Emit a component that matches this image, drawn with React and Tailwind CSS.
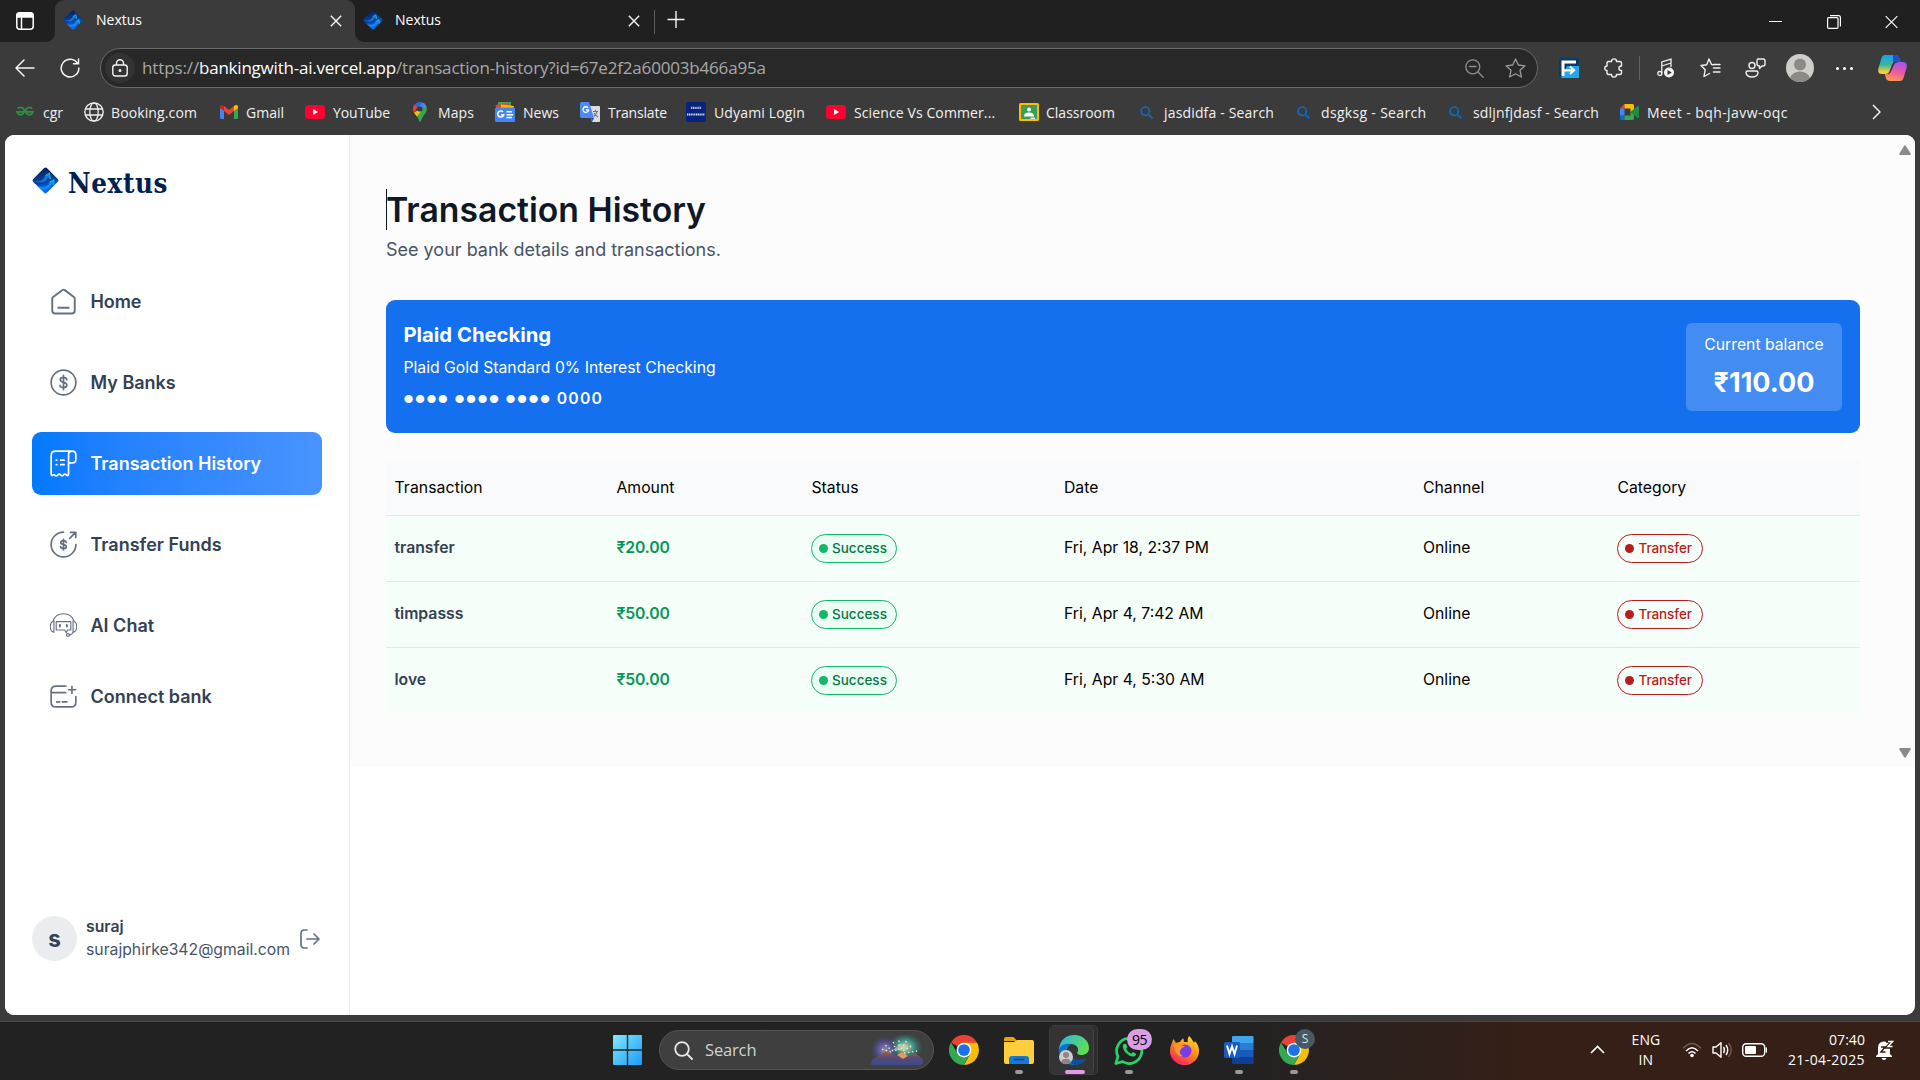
const T = ({ c = "", children }) => (
  <span className={"whitespace-nowrap " + c}>{children}</span>
);

const Gem = ({ size, id }) => (
  <svg width={size} height={size} viewBox="0 0 28 28">
    <defs>
      <linearGradient id={id} x1="0" y1="0" x2="0.2" y2="1">
        <stop offset="0" stopColor="#061a4a" />
        <stop offset="0.55" stopColor="#0a3f9a" />
        <stop offset="1" stopColor="#0b6cf5" />
      </linearGradient>
    </defs>
    <path d="M12.6 1.1Q14 0 15.4 1.1L27 12.6Q28 14 27 15L15.4 26.8Q14 28 12.6 26.8L1 15Q0 14 1 12.6Z" fill={`url(#${id})`} />
    <path d="M1 13.8C6 16 11 15 13.500 9.500L12 9.800L18 6.500L19 12.500L16.500 11.300C14 16 9 18 4 17Z" fill="#1277dc" />
    <path d="M5.500 19.500C11 21.500 15.500 20.500 18 16.500L16.500 16.300L22.500 13.500L23 19L21 18.200C18.500 22.500 14 24.500 9.500 23.600Z" fill="#1288f0" />
    <path d="M1 15L3.500 17.500C9 18.500 13 17 15 13.500C13 16 8 17.500 1 13.800Z" fill="#0a3f9a" />
    <path d="M14 9L18 6.500L19 12.500M18.500 15.500L22.500 13.500L23 19" stroke="#1fb4c4" strokeWidth="1.300" fill="none" />
  </svg>
);

const Chrome = ({ size = 30 }) => (
  <svg width={size} height={size} viewBox="0 0 48 48">
    <path d="M24 24L3.200 12A24 24 0 0 1 44.800 12Z" fill="#ea4335" />
    <path d="M24 12.500H45A24 24 0 0 1 24 48L34 29.500Z" fill="#fbbc04" />
    <path d="M3.200 12L14 29.500L24 35L34 29.500L24 48A24 24 0 0 1 3.200 12Z" fill="#34a853" />
    <circle cx="24" cy="24" r="11.800" fill="#fff" />
    <circle cx="24" cy="24" r="9.400" fill="#1a73e8" />
  </svg>
);

const Globe = () => (
  <svg width="20" height="20" viewBox="0 0 20 20" fill="none" stroke="#f2f2f2" strokeWidth="1.300">
    <circle cx="10" cy="10" r="9.200" />
    <ellipse cx="10" cy="10" rx="4.200" ry="9.200" />
    <path d="M1.500 7H18.500M1.500 13H18.500" />
  </svg>
);
const Gfg = () => (
  <svg width="18" height="12" viewBox="0 0 18 12" fill="none" stroke="#2f8d46" strokeWidth="1.800">
    <path d="M1.800 2.600A3.700 3.700 0 1 1 1 5.900H17A3.700 3.700 0 1 1 16.200 2.600" />
  </svg>
);
const Gmail = () => (
  <svg width="18" height="14" viewBox="0 0 18 14">
    <path d="M0 2V12.800Q0 14 1.200 14H4V5Z" fill="#4285f4" />
    <path d="M18 2V12.800Q18 14 16.800 14H14V5Z" fill="#34a853" />
    <path d="M4 6L9 10L14 6V1L9 5L4 1Z" fill="#ea4335" />
    <path d="M14 1V6L18 3V1.800C18 0 16 -0.500 14.700 0.500Z" fill="#fbbc04" />
    <path d="M4 1V6L0 3V1.800C0 0 2 -0.500 3.300 0.500Z" fill="#c5221f" />
  </svg>
);
const YouTube = () => (
  <svg width="20" height="14" viewBox="0 0 20 14">
    <rect width="20" height="14" rx="3.500" fill="#ff0033" />
    <path d="M8 4L13 7L8 10Z" fill="#fff" />
  </svg>
);
const Maps = () => (
  <svg width="14" height="20" viewBox="0 0 14 20">
    <path d="M7 0A7 7 0 0 0 1.500 2.600L4.500 5.200L9.200 0.400Z" fill="#1a73e8" />
    <path d="M1.500 2.600A7 7 0 0 0 1 10.500L4.500 5.200Z" fill="#ea4335" />
    <path d="M9.200 0.400A7 7 0 0 1 13 3.500L1 10.500C2 12.500 3 13.300 4 14.800L13.300 4.500Z" fill="#fbbc04" />
    <path d="M9.200 0.400L5 5L9.500 8.700L13 3.400A7 7 0 0 0 9.200 0.400Z" fill="#4285f4" />
    <path d="M13 3.400C14.500 6.500 14 9.500 11.500 12.500C8.500 16 8 20 7 20C6.300 20 5.800 17 4 14.800Z" fill="#34a853" />
    <circle cx="7" cy="7" r="2.600" fill="#3b3b3b" />
  </svg>
);
const News = () => (
  <svg width="20" height="20" viewBox="0 0 20 20">
    <path d="M3 0H16V6H3Z" fill="#34a853" />
    <path d="M0.500 3L14 1L15 6H1Z" fill="#ea4335" />
    <path d="M6 2.500L19 4L18 8H6Z" fill="#fbbc04" />
    <rect y="5.500" width="20" height="14.500" rx="1.500" fill="#4285f4" />
    <path d="M8 10A3 3 0 1 0 8.700 12.700H6M11.500 9.800H17M11.500 12.700H18M11.500 15.500H17" stroke="#fff" strokeWidth="1.600" fill="none" />
  </svg>
);
const Translate = () => (
  <svg width="20" height="20" viewBox="0 0 20 20">
    <path d="M8 4H19Q20 4 20 5V19Q20 20 19 20H12Z" fill="#dadce0" />
    <path d="M1.500 0H9L14 16H1.500Q0 16 0 14.500V1.500Q0 0 1.500 0Z" fill="#4c8bf5" />
    <path d="M11 16H14L12 20Z" fill="#1a56c4" />
    <path d="M8 5.800A2.800 2.800 0 1 0 8.600 8H6" stroke="#fff" strokeWidth="1.300" fill="none" />
    <path d="M13 9.500H18M15.500 8V9.500M17 9.500C16.500 12 15 13.500 13.800 14.500M14 11C15 13 16.500 14 18 15" stroke="#6b7480" strokeWidth="1.100" fill="none" />
  </svg>
);
const Udyami = () => (
  <svg width="20" height="20" viewBox="0 0 20 20">
    <rect width="20" height="20" rx="2" fill="#06237e" />
    <path d="M5 5.800H15" stroke="#b9c5e8" strokeWidth="2.200" strokeDasharray="1.200 0.600" />
    <path d="M1 12.500H19" stroke="#dfe6f7" strokeWidth="2.200" strokeDasharray="1.200 0.600" />
  </svg>
);
const Classroom = () => (
  <svg width="20" height="18" viewBox="0 0 20 18">
    <rect width="20" height="18" rx="1.500" fill="#fbbc04" />
    <rect x="2" y="2" width="16" height="14" fill="#3c9d58" />
    <circle cx="10" cy="6.500" r="2" fill="#fff" />
    <path d="M5 13.500C5 10 8 9.500 10 9.500S15 10 15 13.500Z" fill="#fff" />
    <rect x="11.500" y="14.500" width="4.500" height="1.500" fill="#e8e8e8" />
  </svg>
);
const BlueSearch = () => (
  <svg width="13" height="13" viewBox="0 0 13 13" fill="none" stroke="#0f6cbd" strokeWidth="1.700">
    <circle cx="5.200" cy="5.200" r="4.200" />
    <path d="M8.300 8.300L12.500 12.500" />
  </svg>
);
const Meet = () => (
  <svg width="19" height="16" viewBox="0 0 19 16">
    <path d="M0 4.500L4.500 0V4.500Z" fill="#ea4335" />
    <path d="M4.500 0H12.500Q14 0 14 1.500V6L10.500 8V4.500H4.500Z" fill="#fbbc04" />
    <path d="M0 4.500H4.500V11.500H0Z" fill="#4285f4" />
    <path d="M0 11.500H4.500V16H1.500Q0 16 0 14.500Z" fill="#1967d2" />
    <path d="M4.500 11.500H10.500V8L14 10V14.500Q14 16 12.500 16H4.500Z" fill="#34a853" />
    <path d="M10.500 8L17.500 2Q19 1.500 19 3V13Q19 14.500 17.500 14L14 11Z" fill="#1e8e3e" />
  </svg>
);

const bookmarks = [
  { I: Gfg, t: "cgr", w: "w-[68px]", o: "w-[27px]" },
  { I: Globe, t: "Booking.com", w: "w-[136px]", o: "w-[27px]", ls: "tracking-[0.115px]" },
  { I: Gmail, t: "Gmail", w: "w-[85px]", o: "w-[26px]" },
  { I: YouTube, t: "YouTube", w: "w-[108px]", o: "w-[28px]", ls: "tracking-[-0.080px]" },
  { I: Maps, t: "Maps", w: "w-[82px]", o: "w-[25px]", ls: "tracking-[0.098px]" },
  { I: News, t: "News", w: "w-[85px]", o: "w-[28px]" },
  { I: Translate, t: "Translate", w: "w-[106px]", o: "w-[28px]", ls: "tracking-[-0.200px]" },
  { I: Udyami, t: "Udyami Login", w: "w-[140px]", o: "w-[28px]", ls: "tracking-[0.154px]" },
  { I: YouTube, t: "Science Vs Commer...", w: "w-[193px]", o: "w-[28px]", ls: "tracking-[0.110px]" },
  { I: Classroom, t: "Classroom", w: "w-[121px]", o: "w-[27px]" },
  { I: BlueSearch, t: "jasdidfa - Search", w: "w-[157px]", o: "w-[24px]", ls: "tracking-[0.162px]" },
  { I: BlueSearch, t: "dsgksg - Search", w: "w-[152px]", o: "w-[24px]", ls: "tracking-[0.320px]" },
  { I: BlueSearch, t: "sdljnfjdasf - Search", w: "w-[171px]", o: "w-[24px]", ls: "tracking-[0.151px]" },
  { I: Meet, t: "Meet - bqh-javw-oqc", w: "w-[252px]", o: "w-[27px]", ls: "tracking-[0.438px]" },
];

const Cross = ({ s = 12 }) => (
  <svg className="mt-px" width={s} height={s} viewBox="0 0 12 12" stroke="#f5f5f5" strokeWidth="1.400" fill="none">
    <path d="M0.800 0.800L11.200 11.200M11.200 0.800L0.800 11.200" />
  </svg>
);

const TabStrip = () => (
  <div className="flex h-[42px] items-stretch bg-[#3b3b3b] text-[14px] text-white">
    <div className="flex w-[55px] items-center rounded-br-[9px] bg-[#202020] pb-px pl-4">
      <svg width="18" height="18" viewBox="0 0 18 18" fill="none" stroke="#fff" strokeWidth="1.500">
        <rect x="0.800" y="0.800" width="16.400" height="16.400" rx="3" />
        <path d="M1 3.500Q1 1 3.500 1H14.500Q17 1 17 3.500V5H1Z" fill="#fff" />
        <path d="M5.500 5V17" />
      </svg>
    </div>
    <div className="flex w-[300px] bg-[#202020]">
      <div className="flex flex-1 items-center rounded-t-[9px] bg-[#3b3b3b] pb-[2px] pl-2">
        <Gem size={20} id="g1" />
        <T c="ml-[13px] mb-[2px] w-[234px]">Nextus</T>
        <Cross />
      </div>
    </div>
    <div className="flex flex-1 rounded-bl-[9px] bg-[#202020]">
      <div className="flex w-[299px] items-center pb-[2px] pl-2">
        <Gem size={20} id="g2" />
        <T c="ml-[12px] mb-[2px] w-[233px]">Nextus</T>
        <Cross />
      </div>
      <div className="mt-[10px] h-6 w-px bg-[#5c5c5c]" />
      <svg className="ml-3 mt-[11px]" width="18" height="18" viewBox="0 0 18 18" stroke="#f5f5f5" strokeWidth="1.400">
        <path d="M0.500 8.500H17.500M9 0V17" />
      </svg>
      <div className="flex flex-1 items-center justify-end pr-[22px] pt-[1px]">
        <div className="mr-[45px] h-px w-[13px] bg-white" />
        <svg className="mr-[44px]" width="14" height="14" viewBox="0 0 14 14" fill="none" stroke="#fff" strokeWidth="1.200">
          <rect x="0.600" y="2.600" width="10.400" height="10.800" rx="1.200" />
          <path d="M3 0.700H11.500Q13.400 0.700 13.400 2.600V11.500" />
        </svg>
        <svg width="13" height="14" viewBox="0 0 14 14" stroke="#fff" strokeWidth="1.200">
          <path d="M0.700 0.700L13.300 13.300M13.300 0.700L0.700 13.300" />
        </svg>
      </div>
    </div>
  </div>
);

const AddressBar = () => (
  <div className="flex h-[52px] items-center pt-0">
    <svg className="ml-[15px]" width="20" height="18" viewBox="0 0 20 18" fill="none" stroke="#f5f5f5" strokeWidth="1.500" strokeLinecap="round" strokeLinejoin="round">
      <path d="M9 1L1 9L9 17M1 9H19" />
    </svg>
    <svg className="ml-[25px]" width="20" height="20" viewBox="0 0 20 20" fill="none" stroke="#f5f5f5" strokeWidth="1.500" strokeLinecap="round">
      <path d="M17.500 5.500A8.800 8.800 0 1 0 18.800 10M18.500 1V5.800H13.500" />
    </svg>
    <div className="ml-[20px] flex h-10 w-[1438px] items-center rounded-full border border-[#6a6a6a] bg-[#282828]">
      <div className="ml-[4px] flex h-[30px] w-[30px] items-center justify-center rounded-full bg-[#333333]">
        <svg width="16" height="18" viewBox="0 0 16 18" fill="none" stroke="#f5f5f5" strokeWidth="1.400">
          <rect x="0.800" y="6" width="14.400" height="11" rx="2.500" />
          <path d="M4.500 6V4.200A3.500 3.500 0 0 1 11.500 4.200V6" />
          <circle cx="8" cy="11.500" r="0.800" fill="#fff" />
        </svg>
      </div>
      <div className="ml-[7px] flex-1 text-[17px] text-[#a8a8a8]">
        <T c="tracking-[-0.123px]">https://</T><T c="tracking-[-0.219px] text-white">bankingwith-ai.vercel.app</T><T c="tracking-[-0.180px]">/transaction-history?id=67e2f2a60003b466a95a</T>
      </div>
      <svg className="mr-[21px]" width="19" height="19" viewBox="0 0 19 19" fill="none" stroke="#8f8f8f" strokeWidth="1.300" strokeLinecap="round">
        <circle cx="7.800" cy="7.800" r="7" />
        <path d="M13 13L18.200 18.200M4.500 7.500H11" />
      </svg>
      <svg className="mr-[11px]" width="21" height="20" viewBox="0 0 21 20" fill="none" stroke="#9a9a9a" strokeWidth="1.300" strokeLinejoin="round">
        <path d="M10.500 1L13.300 7L20 7.800L15 12.300L16.400 19L10.500 15.700L4.600 19L6 12.300L1 7.800L7.700 7Z" />
      </svg>
    </div>
    <svg className="ml-[21px]" width="21" height="20" viewBox="0 0 21 20">
      <rect width="20" height="20" rx="2" fill="#0b3a66" />
      <path d="M8 8H20V20H2Z" fill="#1fa8ea" />
      <path d="M4 18V4H17" stroke="#fff" strokeWidth="3" fill="none" />
      <path d="M5 12.300H14M11 8.500L15 12.300L11 16" stroke="#fff" strokeWidth="2.200" fill="none" />
    </svg>
    <svg className="ml-[24px]" width="20" height="20" viewBox="0 0 20 20" fill="none" stroke="#f0f0f0" strokeWidth="1.400" strokeLinejoin="round">
      <path d="M3 5Q3 3.500 4.500 3.500H7.500C7.500 0 12.500 0 12.500 3.500H16Q17.500 3.500 17.500 5V8C14 8 14 12.500 17.500 12.500V15Q17.500 16.500 16 16.500H12.500C12.500 20 7.500 20 7.500 16.500H4.500Q3 16.500 3 15V12.500C0 12.500 0 8 3 8Z" />
    </svg>
    <div className="ml-[15px] h-6 w-px bg-[#626262]" />
    <svg className="ml-[17px]" width="18" height="20" viewBox="0 0 18 20" fill="none" stroke="#f0f0f0" strokeWidth="1.300">
      <circle cx="2.800" cy="15.500" r="2" />
      <path d="M4.800 15.500V4L14 1.200V9M4.800 8L14 5" />
      <circle cx="12" cy="14.500" r="5" fill="#f5f5f5" stroke="none" />
      <path d="M10.500 12L14.800 14.500L10.500 17Z" fill="#3b3b3b" stroke="none" />
    </svg>
    <svg className="ml-[25px]" width="21" height="20" viewBox="0 0 21 20" fill="none" stroke="#f0f0f0" strokeWidth="1.400" strokeLinecap="round" strokeLinejoin="round">
      <path d="M13.500 6.800L11.500 6.500L9 1L6.700 6.800L1 7.500L5.200 11.700L4 18.500L9.500 15.500M13.500 10H20M13.500 14H20M13.500 6.500H20" />
    </svg>
    <svg className="ml-[24px]" width="21" height="20" viewBox="0 0 21 20" fill="none" stroke="#f0f0f0" strokeWidth="1.400" strokeLinejoin="round">
      <circle cx="7" cy="7.500" r="3" />
      <path d="M2.500 13H11.500Q13 13 13 14.500C13 17.500 10 19 7 19S1 17.500 1 14.500Q1 13 2.500 13Z" />
      <path d="M13 1H18Q20 1 20 3V6Q20 8 18 8H17L14.500 10.500V8Q12 8 12 6V3Q12 1 13 1Z" />
    </svg>
    <div className="ml-[20px] h-[28px] w-[28px] overflow-hidden rounded-full bg-[#d0ceca]">
      <svg width="28" height="28" viewBox="0 0 28 28" fill="#8d8985">
        <circle cx="14" cy="10.500" r="6" />
        <ellipse cx="14" cy="24" rx="9.500" ry="6.500" />
      </svg>
    </div>
    <div className="ml-[22px] flex gap-[4px]">
      <div className="h-[3px] w-[3px] rounded-full bg-white" />
      <div className="h-[3px] w-[3px] rounded-full bg-white" />
      <div className="h-[3px] w-[3px] rounded-full bg-white" />
    </div>
    <svg className="ml-[25px]" width="29" height="26" viewBox="0 0 29 26">
      <defs>
        <linearGradient id="cpa" x1="0" y1="0" x2="0" y2="1">
          <stop offset="0" stopColor="#1b9ff2" />
          <stop offset="0.500" stopColor="#35b6a0" />
          <stop offset="0.900" stopColor="#f7d22e" />
        </linearGradient>
        <linearGradient id="cpb" x1="0.600" y1="0" x2="0.300" y2="1">
          <stop offset="0" stopColor="#a256ef" />
          <stop offset="0.500" stopColor="#ee5a9c" />
          <stop offset="1" stopColor="#fb9a4b" />
        </linearGradient>
      </defs>
      <path d="M7 0H17Q20.500 0 21.500 4L22.500 7H18Q15 7 14 10L11.500 16.500Q10.500 19 8 19H4Q-1 19 0.500 13L3.500 3Q4.500 0 7 0Z" fill="url(#cpa)" />
      <path d="M15 0H17.500Q20.500 0 21.500 4L22.500 7H18Q16 7 15 9Z" fill="#1d4fd8" />
      <path d="M22 26H12Q8.500 26 7.500 22L6.800 19H9Q12 19 13 16L16 9.500Q17 7 20 7H25Q30 7 28.500 13L25.500 23Q24.500 26 22 26Z" fill="url(#cpb)" />
      <path d="M14 10Q15 7 18 7H20Q17 7 16 9.500L13 16Q12 19 9 19H8Q10.500 19 11.500 16.500Z" fill="#3b3b3b" />
    </svg>
  </div>
);

const BookmarkBar = () => (
  <div className="flex h-[41px] items-center pl-4 text-[14px] text-[#f2f2f2]">
    {bookmarks.map(({ I, t, w, o, ls }, i) => (
      <div key={i} className={"flex shrink-0 items-center pb-[5px] " + w}>
        <div className={"shrink-0 " + o}><I /></div>
        <T c={ls}>{t}</T>
      </div>
    ))}
    <svg className="mb-[5px]" width="9" height="16" viewBox="0 0 9 16" fill="none" stroke="#f2f2f2" strokeWidth="1.500">
      <path d="M1 1L8 8L1 15" />
    </svg>
  </div>
);

const stroke = { width: 27, height: 27, viewBox: "0 0 24 24", fill: "none", stroke: "currentColor", strokeWidth: 1.5, strokeLinecap: "round", strokeLinejoin: "round" };
const dollar = "M14.900 9.400C14.700 8.100 13.600 7.400 12 7.400S9.100 8.200 9.100 9.600C9.100 12.700 15 11 15 14.300C15 15.800 13.700 16.600 12 16.600S9 15.900 8.900 14.500M12 5.700V18.300";
const HomeIcon = () => (<svg {...stroke} strokeWidth="1.700"><path d="M2 9.600Q2 8.600 2.800 8L10.800 1.900Q12 1 13.200 1.900L21.200 8Q22 8.600 22 9.600V20Q22 22.600 19.400 22.600H4.600Q2 22.600 2 20V9.600ZM7.300 17.500H16.700" /></svg>);
const BankIcon = () => (<svg {...stroke}><circle cx="12" cy="12" r="11" /><path d={dollar} /></svg>);
const HistoryIcon = () => (
  <svg {...stroke}>
    <path d="M16.500 11.500V21.200Q16.500 23.800 14.400 22Q13.100 20.800 11.900 22.300Q10.700 23.800 9.500 22.300Q8.200 20.600 6.900 22.300Q5.600 23.800 4.300 22.300Q3.600 21.400 2.600 22.200Q1 23.500 1 20.500V5Q1 1 5 1H19.700Q23 1 23 4.700V8.500Q23 11.500 20 11.500H16.500V4Q16.500 1 19.700 1M9.500 9H12.500M9.500 13H12.500M5.600 9H6M5.600 13H6" />
  </svg>
);
const TransferIcon = () => (
  <svg {...stroke}>
    <path d="M12 1A11 11 0 1 0 23 12M17.500 6.500L22.500 1.500M18.300 1.200H22.900V5.800" />
    <path d="M14.400 10.200C14.200 9.100 13.300 8.600 12 8.600S9.600 9.300 9.600 10.400C9.600 12.800 14.500 11.500 14.500 13.900C14.500 15 13.400 15.600 12 15.600S9.500 15 9.400 13.900M12 7.400V16.800" />
  </svg>
);
const ChatIcon = () => (
  <svg {...stroke} strokeWidth="1">
    <path d="M2.500 8.500C4 3.500 8 1.500 12 1.500S20 3.500 21.500 8.500M3.500 8C-0.800 9-0.800 17 3.500 18V8M20.500 8C24.800 9 24.800 17 20.500 18V8" />
    <path d="M5.500 8.500H18.500V16H15.500L14.500 18.500L13 16H5.500ZM20.500 18C19.500 20 18.500 20.500 17 20.500" />
    <path d="M8.800 11.500V12.800M15 11.500V12.800" strokeWidth="1.800" />
    <circle cx="16" cy="20.500" r="1.300" />
  </svg>
);
const ConnectIcon = () => (
  <svg {...stroke}>
    <path d="M14 2.800H5.500Q1 2.800 1 7V17Q1 21.200 5.500 21.200H18.500Q23 21.200 23 17V12M1 8.500H14M6 16.800H8.500M11 16.800H15M19.500 3V9M16.500 6H22.800" />
  </svg>
);

const navItems = [
  { I: HomeIcon, t: "Home", ls: "tracking-[-0.100px]" },
  { I: BankIcon, t: "My Banks" },
  { I: HistoryIcon, t: "Transaction History", on: true },
  { I: TransferIcon, t: "Transfer Funds" },
  { I: ChatIcon, t: "AI Chat" },
];

const Sidebar = () => (
  <aside className="flex w-[345px] flex-col border-r border-[#eaecf0] bg-white pl-[27px] pt-8 text-[#344054]">
    <div className="flex h-[36px] items-start">
      <Gem size={27} id="g3" />
      <T c="ml-[9px] mt-px font-['DejaVu_Serif_Condensed','DejaVu_Serif',serif] text-[27.500px] font-bold leading-[31px] tracking-[0.600px] text-[#00214f]">Nextus</T>
    </div>
    <nav className="mt-[67px] flex flex-col gap-[18px] text-[18px] font-semibold">
      {navItems.map(({ I, t, ls, on }) => (
        <div
          key={t}
          className={"flex h-[63px] w-[290px] items-center gap-[13.500px] rounded-[9px] pl-[18px] " + (on ? "bg-gradient-to-r from-[#0179fe] to-[#4893ff] text-white" : "")}
        >
          <span className={on ? "text-white" : "text-[#667085]"}><I /></span>
          <T c={ls}>{t}</T>
        </div>
      ))}
    </nav>
    <div className="mt-[26px] flex items-center gap-[13.500px] pl-[18px] text-[18px] font-semibold">
      <span className="text-[#667085]"><ConnectIcon /></span>
      <T>Connect bank</T>
    </div>
    <div className="mb-[54px] mt-auto flex h-[45px] w-[290px] items-center">
      <div className="flex h-[45px] w-[45px] items-center justify-center rounded-full bg-[#eaecf0] pt-px text-[22.500px] font-bold">s</div>
      <div className="ml-[9px] flex w-[213px] flex-col text-[15.750px] leading-[22.500px]">
        <span className="font-semibold">suraj</span>
        <T c="text-[#475467]">surajphirke342@gmail.com</T>
      </div>
      <svg className="ml-[1px] text-[#667085]" width="20" height="20" viewBox="0 0 20 20" fill="none" stroke="currentColor" strokeWidth="1.700" strokeLinecap="round" strokeLinejoin="round">
        <path d="M7 1H4.500Q1 1 1 4.500V15.500Q1 19 4.500 19H7M7 10H19M14 5L19 10L14 15" />
      </svg>
    </div>
  </aside>
);

const cols = "grid grid-cols-[222px_195px_252.500px_359px_194.500px_1fr] items-center pl-[8.500px]";
const rows = [
  ["transfer", "₹20.00", "Fri, Apr 18, 2:37 PM"],
  ["timpasss", "₹50.00", "Fri, Apr 4, 7:42 AM"],
  ["love", "₹50.00", "Fri, Apr 4, 5:30 AM"],
];

const Dots = () => <span className="relative -top-px text-[11px] tracking-[1.400px]">●●●●</span>;

const Main = () => (
  <main className="flex h-[632px] w-[1565px] bg-[#fcfcfd]">
    <div className="ml-[36px] w-[1474px] pt-[54px]">
      <div className="flex h-[41px] items-center border-l border-[#101828] pt-[2px] text-[33.750px] font-[560] text-[#101828]">
        <T c="-ml-px">Transaction History</T>
      </div>
      <p className="mt-[6px] text-[18px] leading-[27px] text-[#475467]">See your bank details and transactions.</p>
      <section className="mt-[37px] flex h-[133px] justify-between rounded-[9px] bg-[#1570ef] pl-[17.500px] pr-[18px] pt-[23px] text-white">
        <div>
          <h2 className="text-[20.250px] font-bold leading-[24px]">Plaid Checking</h2>
          <p className="mt-[9px] text-[15.750px] leading-[24px]">Plaid Gold Standard 0% Interest Checking</p>
          <p className="mt-[7px] text-[15.750px] font-semibold leading-[24px] tracking-[1.240px]"><Dots /> <Dots /> <Dots /> 0000</p>
        </div>
        <div className="flex h-[88px] w-[156px] flex-col items-center rounded-[6px] bg-white/20 pt-[10px]">
          <p className="text-[15.750px] leading-[24px]">Current balance</p>
          <p className="mt-[10px] text-[27px] font-bold leading-[32px]">₹110.00</p>
        </div>
      </section>
      <div className="mt-[28px] text-[15.750px] text-black">
        <div className={"h-[54px] bg-[#f9fafb] " + cols}>
          <T c="tracking-[0.090px]">Transaction</T><span>Amount</span><span>Status</span><span>Date</span><span>Channel</span><span>Category</span>
        </div>
        {rows.map(([n, a, d]) => (
          <div key={n} className={"h-[66px] border-t border-[#e5e7eb] bg-[#f6fef9] " + cols}>
            <span className="pb-[1px] font-semibold text-[#344054]">{n}</span>
            <span className="pb-[1px] font-semibold tracking-[-0.120px] text-[#039855]">{a}</span>
            <span className="-ml-[0.500px] flex h-[29px] w-[86px] items-center gap-1 rounded-full border border-[#12b76a] bg-[#ecfdf3] pl-[7px] text-[13.500px] font-medium text-[#027a48]">
              <i className="h-[9px] w-[9px] rounded-full bg-[#12b76a]" />Success
            </span>
            <span className="pb-[1px]">{d}</span>
            <span className="pb-[1px]">Online</span>
            <span className="-ml-px flex h-[29px] w-[86px] items-center gap-[5px] rounded-full border border-[#b91c1c] pl-[7px] text-[13.500px] font-medium tracking-[-0.100px] text-[#b91c1c]">
              <i className="h-[9px] w-[9px] rounded-full bg-[#b91c1c]" />Transfer
            </span>
          </div>
        ))}
      </div>
    </div>
    <div className="ml-[39px] flex flex-col items-center justify-between pb-[9px] pt-[10px]">
      <svg width="12" height="10" viewBox="0 0 12 10" fill="#8b8b8b"><path d="M5 1Q6 -0.500 7 1L11.600 8.500Q12 10 10.800 10H1.200Q0 10 0.400 8.500Z" /></svg>
      <svg width="12" height="10" viewBox="0 0 12 10" fill="#8b8b8b"><path d="M5 9Q6 10.500 7 9L11.600 1.500Q12 0 10.800 0H1.200Q0 0 0.400 1.500Z" /></svg>
    </div>
  </main>
);

const Slot = ({ c, dot = true, children }) => (
  <div className={"relative flex h-[50px] w-[30px] items-center justify-center " + c}>
    {children}
    {dot && <i className="absolute bottom-[1px] h-[4px] w-[8px] rounded-full bg-[#9a9a9a]" />}
  </div>
);

const Taskbar = () => (
  <footer className="flex h-[59px] items-center border-t border-[#4a4644] bg-gradient-to-r from-[#232222] from-65% to-[#361f16] to-80% pb-[2px] text-white">
    <svg className="ml-[613px]" width="29" height="30" viewBox="0 0 29 30">
      <defs>
        <linearGradient id="win" x1="0" y1="0" x2="1" y2="1"><stop offset="0" stopColor="#7eeafd" /><stop offset="1" stopColor="#1b9cf5" /></linearGradient>
      </defs>
      <path d="M0 1Q0 0 1 0H13.800V14.300H0ZM15.200 0H28Q29 0 29 1V14.300H15.200ZM0 15.700H13.800V30H1Q0 30 0 29ZM15.200 15.700H29V29Q29 30 28 30H15.200Z" fill="url(#win)" />
    </svg>
    <div className="ml-[17px] flex h-10 w-[275px] items-center rounded-full border border-[#545454] bg-[#3f3f3f]">
      <svg className="ml-[14px]" width="19" height="19" viewBox="0 0 19 19" fill="none" stroke="#e8e8e8" strokeWidth="1.800" strokeLinecap="round">
        <circle cx="8" cy="8" r="6.800" /><path d="M13 13L18 18" />
      </svg>
      <span className="ml-[12px] w-[166px] pt-px text-[16.500px] tracking-[-0.150px] text-[#d2d2d2]">Search</span>
      <svg width="52" height="30" viewBox="0 0 52 30">
        <defs>
          <radialGradient id="fw1"><stop offset="0" stopColor="#cfd7b0" /><stop offset="0.500" stopColor="#3f9f8e" stopOpacity="0.850" /><stop offset="1" stopColor="#2c6f72" stopOpacity="0" /></radialGradient>
          <radialGradient id="fw2"><stop offset="0" stopColor="#9a8fb0" /><stop offset="0.600" stopColor="#55509a" stopOpacity="0.800" /><stop offset="1" stopColor="#4a4a7a" stopOpacity="0" /></radialGradient>
          <linearGradient id="mt" x1="0" y1="0" x2="0" y2="1"><stop offset="0" stopColor="#a8643c" /><stop offset="0.450" stopColor="#5b4a74" /><stop offset="1" stopColor="#3b4a8c" /></linearGradient>
        </defs>
        <ellipse cx="34" cy="12" rx="18" ry="14" fill="url(#fw1)" />
        <ellipse cx="14" cy="15" rx="14" ry="14" fill="url(#fw2)" />
        <path d="M0 30Q0 23 5 23L15 16L23 20L32 24L44 18L52 24V27Q52 30 49 30Z" fill="url(#mt)" />
        <path d="M26 20L32 24L37 21L31 17Z" fill="#f0955c" />
        <path d="M25 16L22 6M28 15L28 4M30 14L37 4M22 16L14 10M32 16L42 10M33 18L46 16M20 17L10 14" stroke="#f7f3da" strokeWidth="1.300" strokeDasharray="1.500 2.500" />
        <path d="M22 15L30 8L36 16Z" fill="#e8e0b8" opacity="0.500" />
      </svg>
    </div>
    <div className="ml-[15px]"><Chrome /></div>
    <Slot c="ml-[25px]">
      <svg width="30" height="27" viewBox="0 0 30 27">
        <path d="M0 2Q0 0 2 0H9Q10 0 11 1.500L13 4H0Z" fill="#e8a50a" />
        <path d="M0 5H10L13 3H28Q30 3 30 5V25Q30 27 28 27H2Q0 27 0 25Z" fill="#ffce3f" />
        <path d="M5 27V22Q5 19 8 19H22Q25 19 25 22V27Z" fill="#1479d0" />
        <path d="M10 22.500H20" stroke="#0b3f7a" strokeWidth="1.500" />
      </svg>
    </Slot>
    <div className="relative ml-[15px] flex h-[50px] w-[49px] items-center rounded-[5px] border border-[#3d3c3c] bg-[#2d2c2c]">
      <div className="flex h-full w-[44px] items-center justify-center rounded-[5px] border-r border-[#474646] bg-[#353434] pl-[5px]">
        <svg width="30" height="30" viewBox="0 0 30 30">
          <defs>
            <linearGradient id="ed" x1="0" y1="0.200" x2="1" y2="0.600"><stop offset="0" stopColor="#2fb6ea" /><stop offset="1" stopColor="#5fe04a" /></linearGradient>
          </defs>
          <path d="M0 14C1 5 7 0 15 0C24 0 30 6 30 13C30 18 26 20 22.500 20C19 20 17.500 18.500 18.500 17C20.500 13 17 9 12 9C6 9 1 12 0 18Z" fill="url(#ed)" />
          <path d="M0 14C2 9 8 8 12 9C8 11 7 16 9 21C11 26 18 28 27 23.500C24 28 20 30 15 30C6 30 0 23 0 14Z" fill="#1172c9" />
          <path d="M11 13C10 18 12 23 18 24.500C22 25.500 26 24 27.500 23C24 28 20 30 16 30C8 28 6 18 11 13Z" fill="#0b4f9e" />
          <circle cx="7" cy="22" r="7" fill="#cfcdca" />
          <circle cx="7" cy="20" r="3" fill="#8b8784" /><ellipse cx="7" cy="26.500" rx="4.500" ry="2.800" fill="#8b8784" />
        </svg>
      </div>
      <i className="absolute bottom-0 left-[15px] h-[4px] w-[20px] rounded-full bg-[#dd9de4]" />
    </div>
    <Slot c="ml-[16px]">
      <svg width="31" height="31" viewBox="0 0 31 31" fill="none">
        <path d="M2 29L4 21.500A13 13 0 1 1 9 27Z" stroke="#25d366" strokeWidth="2.800" strokeLinejoin="round" />
        <path d="M10.500 8.500C8 10.500 9 14.500 12.500 18S20.500 23 22.500 20.500C23.500 19 22.500 18.500 19.500 17L17.800 18.800C15.500 18 13.500 16 12.600 13.800L13.900 12L12.500 8.700Z" fill="#25d366" />
      </svg>
      <span className="absolute left-[13px] top-[4px] flex h-[21px] w-[25px] items-center justify-center rounded-full bg-[#dd9de4] text-[14px] tracking-[-0.500px] text-black">95</span>
    </Slot>
    <Slot c="ml-[25px]" dot={false}>
      <svg width="29" height="29" viewBox="0 0 29 29">
        <defs>
          <linearGradient id="ff" x1="0.800" y1="0" x2="0.200" y2="1"><stop offset="0" stopColor="#ffe226" /><stop offset="0.450" stopColor="#ff8a16" /><stop offset="1" stopColor="#f5156c" /></linearGradient>
        </defs>
        <path d="M19 0C22 3 23 5 24 7L25 5C28 8 29 12 29 15A14.300 14 0 0 1 0 15C0 10 2 7 3.500 3L6 7C8 6 9 6 10 6C11 4 12 3 13.500 2.500L14 6L18 6C17 4 18 2 19 0Z" fill="url(#ff)" />
        <circle cx="15" cy="15" r="6.500" fill="#7a3be8" />
        <path d="M4 9C7 7 12 9 15 11C12 11 11 13 10 15C9 16 10 19 13 20C8 21 4 16 4 9Z" fill="#ff9a2a" />
      </svg>
    </Slot>
    <Slot c="ml-[25px]">
      <svg width="30" height="28" viewBox="0 0 30 28">
        <path d="M8 7V1Q8 0 9 0H28.500Q29.500 0 29.500 1V7Z" fill="#41a5ee" />
        <path d="M8 7H29.500V14H8Z" fill="#2b7cd3" />
        <path d="M8 14H29.500V21H8Z" fill="#185abd" />
        <path d="M8 21H29.500V27Q29.500 28 28.500 28H9Q8 28 8 27Z" fill="#103f91" />
        <rect y="6" width="16" height="16" rx="1.500" fill="#185abd" />
        <path d="M3 9.500L5.500 18L8 10.500L10.500 18L13 9.500" fill="none" stroke="#fff" strokeWidth="2" />
      </svg>
    </Slot>
    <Slot c="ml-[25px]">
      <Chrome />
      <span className="absolute left-[16px] top-[4px] flex h-[20px] w-[20px] items-center justify-center rounded-full bg-[#455a64] text-[12px] text-[#dfe5e8]">S</span>
    </Slot>
    <div className="ml-auto flex items-center pb-px pr-[26px] text-[14px]">
      <svg className="mr-[26px]" width="15" height="9" viewBox="0 0 15 9" fill="none" stroke="#fff" strokeWidth="1.700"><path d="M1 8L7.500 1.500L14 8" /></svg>
      <div className="mr-[21px] flex w-[30px] flex-col items-center leading-[20px]"><T c="tracking-[0.167px]">ENG</T><T c="tracking-[0.273px]">IN</T></div>
      <svg className="mr-[10px]" width="20" height="16" viewBox="0 0 20 16" fill="none" stroke="#fff" strokeWidth="1.600">
        <path d="M1 6.500Q10 -3.500 19 6.500" stroke="#6d5b54" /><path d="M4 9Q10 2.500 16 9M6.500 11.500Q10 8 13.500 11.500" /><circle cx="10" cy="13.500" r="1.800" fill="#fff" stroke="none" />
      </svg>
      <svg className="mr-[9px]" width="21" height="18" viewBox="0 0 21 18" fill="none" stroke="#fff" strokeWidth="1.400" strokeLinejoin="round">
        <path d="M1 6H4L9 1.800V16.200L4 12H1ZM11.500 6Q13.500 9 11.500 12M14 4Q17.500 9 14 14" /><path d="M16.500 2Q22 9 16.500 16" stroke="#6d5b54" />
      </svg>
      <svg className="mr-[21px]" width="25" height="14" viewBox="0 0 25 14" fill="none" stroke="#fff" strokeWidth="1.400">
        <rect x="0.700" y="0.700" width="22" height="12.600" rx="3.500" /><rect x="3" y="3" width="11" height="8" rx="1" fill="#fff" stroke="none" /><path d="M24.300 4.500V9.500" />
      </svg>
      <div className="flex flex-col items-end leading-[20px]"><T c="tracking-[0.060px]">07:40</T><T c="tracking-[0.400px]">21-04-2025</T></div>
      <svg className="ml-[11px]" width="18" height="20" viewBox="0 0 18 20" fill="#fff">
        <path d="M2 14V8Q2 1.500 8 1.500Q14 1.500 14 8V14L16 16V17H0V16ZM5.500 18H10.500Q10 20 8 20T5.500 18Z" />
        <path d="M5 7H9L5 12H9.500" fill="none" stroke="#361f16" strokeWidth="1.500" />
        <path d="M10 1H17L11.500 7H16.500" fill="none" stroke="#361f16" strokeWidth="3.500" />
        <path d="M12 1.500H16.500L12 6.500H16.500" fill="none" stroke="#fff" strokeWidth="1.400" />
      </svg>
    </div>
  </footer>
);

export default function App() {
  return (
    <div className="flex h-[1080px] w-[1920px] flex-col overflow-hidden bg-[#3b3b3b] font-['Open_Sans',sans-serif]">
      <TabStrip />
      <AddressBar />
      <BookmarkBar />
      <div className="mx-[5px] flex h-[880px] overflow-hidden rounded-[9px] bg-white font-['Inter',sans-serif]">
        <Sidebar />
        <Main />
      </div>
      <div className="h-[6px]" />
      <Taskbar />
    </div>
  );
}
